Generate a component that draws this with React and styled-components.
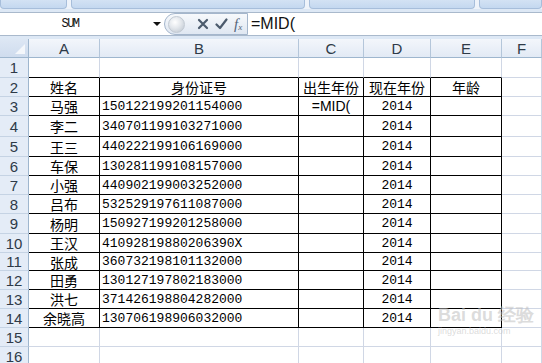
import React from "react";
import styled, { createGlobalStyle } from "styled-components";

const GlobalStyle = createGlobalStyle`
  html, body {
    margin: 0;
    padding: 0;
    overflow: hidden;
    background: #fff;
  }
`

const COLS = "29px 71px 199px 65px 67px 71px 1fr"
const ROW_HEIGHTS = [19, 20, 19, 19, 21, 20, 19, 19, 19, 20, 19, 18, 19, 19, 19, 19, 19]

const people = [
    ["马强", "150122199201154000"],
    ["李二", "340701199103271000"],
    ["王三", "440222199106169000"],
    ["车保", "130281199108157000"],
    ["小强", "440902199003252000"],
    ["吕布", "532529197611087000"],
    ["杨明", "150927199201258000"],
    ["王汉", "41092819880206390X"],
    ["张成", "360732198101132000"],
    ["田勇", "130127197802183000"],
    ["洪七", "371426198804282000"],
    ["余晓高", "130706198906032000"],
]

const Window = styled.div`
  position: relative;
  width: 542px;
  height: 363px;
  overflow: hidden;
  background: #dde8f5;
  font-family: "Liberation Sans", Arial, sans-serif;
`

const Ribbon = styled.div`
  display: flex;
  gap: 4px;
  height: 9px;
  background: #eef3fa;
`

const RibbonButton = styled.div`
  width: ${p => p.$w}px;
  flex: ${p => (p.$grow ? 1 : "none")};
  height: 8px;
  border: 1px solid #a7bedb;
  border-top: none;
  border-radius: 0 0 4px 4px;
  background: linear-gradient(#d3e2f4, #c4d8f0);
`

const FormulaBar = styled.div`
  display: flex;
  height: 22px;
  margin-top: 3px;
  border-top: 1px solid #a9b9cc;
  border-bottom: 1px solid #a9b9cc;
  background: #fff;
`

const NameBox = styled.div`
  position: relative;
  width: 164px;
  display: flex;
  align-items: center;
  justify-content: center;
  padding-right: 24px;
  box-sizing: border-box;
  font-family: "Liberation Mono", monospace;
  font-size: 12px;
  letter-spacing: -1.5px;
  color: #111;
`

const DropArrow = styled.span`
  position: absolute;
  right: 3px;
  top: 9px;
  width: 0;
  height: 0;
  border-left: 4px solid transparent;
  border-right: 4px solid transparent;
  border-top: 4px solid #111;
`

const FxPill = styled.div`
  display: flex;
  align-items: center;
  gap: 6px;
  width: 84px;
  padding-left: 3px;
  box-sizing: border-box;
  border: 1px solid #a4b6cc;
  border-radius: 11px 0 0 11px;
  background: linear-gradient(#f7f9fc, #dfe7f2);
`

const Orb = styled.span`
  width: 15px;
  height: 15px;
  margin-right: 6px;
  border-radius: 50%;
  background: radial-gradient(circle at 40% 35%, #ffffff 0%, #e3e7ec 45%, #b9c2cc 100%);
  border: 1px solid #c2cad3;
`

const Fx = styled.span`
  font-family: "Liberation Serif", serif;
  font-style: italic;
  font-size: 15px;
  color: #54657a;
  sub {
    font-size: 9px;
    vertical-align: -1px;
  }
`

const FormulaInput = styled.div`
  flex: 1;
  display: flex;
  align-items: center;
  padding-left: 3px;
  font-size: 16px;
  color: #111;
`

const Sheet = styled.div`
  display: grid;
  grid-template-columns: ${COLS};
  grid-template-rows: ${ROW_HEIGHTS.map(h => h + "px").join(" ")};
  margin-top: 3px;
  background: #fff;
`

const Corner = styled.div`
  position: relative;
  box-sizing: border-box;
  border-right: 1px solid #9eb6ce;
  border-bottom: 1px solid #9eb6ce;
  background: linear-gradient(#dde7f4, #cfdcee);
  &::after {
    content: "";
    position: absolute;
    right: 3px;
    bottom: 3px;
    border-left: 10px solid transparent;
    border-bottom: 10px solid #f4f7fb;
  }
`

const ColHead = styled.div`
  display: flex;
  align-items: center;
  justify-content: center;
  box-sizing: border-box;
  border-right: 1px solid #b4c6da;
  border-bottom: 1px solid #9eb6ce;
  background: linear-gradient(#f3f6fb, #e2eaf5);
  color: #2e3a48;
  font-size: 15px;
  line-height: 1;
`

const RowHead = styled.div`
  display: flex;
  align-items: center;
  justify-content: center;
  box-sizing: border-box;
  border-right: 1px solid #9eb6ce;
  border-bottom: 1px solid #c5d3e4;
  background: #e4ecf7;
  color: #2e3a48;
  font-size: 15px;
  line-height: 1;
`

const Cell = styled.div`
  display: flex;
  align-items: center;
  justify-content: ${p => (p.$left ? "flex-start" : "center")};
  padding-left: ${p => (p.$left ? "2px" : "0")};
  box-sizing: border-box;
  white-space: nowrap;
  line-height: 1;
  border-right: 1px solid ${p => (p.$boxR ? "#000" : "#d0d7e5")};
  border-bottom: 1px solid ${p => (p.$boxB ? "#000" : "#d0d7e5")};
  color: #000;
  font-family: ${p =>
    p.$kind === "mono"
      ? '"Liberation Mono", monospace'
      : p.$kind === "sans"
      ? '"Liberation Sans", Arial, sans-serif'
      : '"Noto Sans CJK SC", sans-serif'};
  font-size: ${p => (p.$kind === "mono" ? "13px" : p.$kind === "sans" ? "14px" : "14px")};
`

const Watermark = styled.div`
  position: absolute;
  left: 438px;
  top: 306px;
  color: rgba(190, 190, 190, 0.55);
  font-family: "Liberation Sans", Arial, sans-serif;
  font-weight: bold;
  font-size: 18px;
  line-height: 18px;
  small {
    display: block;
    font-size: 9px;
    font-weight: normal;
    line-height: 14px;
  }
`

function XIcon() {
    return (
        <svg width="12" height="12" viewBox="0 0 12 12">
            <path d="M2 2 L10 10 M10 2 L2 10" stroke="#4c5b6d" strokeWidth="2.2" strokeLinecap="round"/>
        </svg>
    )
}

function CheckIcon() {
    return (
        <svg width="13" height="12" viewBox="0 0 13 12">
            <path d="M1.5 6.5 L5 10 L11.5 1.5" stroke="#4c5b6d" strokeWidth="2.2" fill="none" strokeLinecap="round" strokeLinejoin="round"/>
        </svg>
    )
}

function buildRows() {
    const letters = ["A", "B", "C", "D", "E", "F"]
    const cells = [<Corner key="corner"/>]
    letters.forEach(l => cells.push(<ColHead key={"h" + l}>{l}</ColHead>))

    for (let r = 1; r <= 16; r++) {
        cells.push(<RowHead key={"r" + r}>{r}</RowHead>)
        const inTable = r >= 2 && r <= 14
        const aboveTable = r === 1
        const values = ["", "", "", "", "", ""]
        const kinds = ["cjk", "mono", "cjk", "mono", "cjk", "cjk"]
        if (r === 2) {
            values.splice(0, 5, "姓名", "身份证号", "出生年份", "现在年份", "年龄")
            kinds[1] = "cjk"
            kinds[3] = "cjk"
        } else if (r >= 3 && r <= 14) {
            const [name, id] = people[r - 3]
            values[0] = name
            values[1] = id
            values[3] = "2014"
            if (r === 3) {
                values[2] = "=MID("
                kinds[2] = "sans"
            }
        }
        for (let c = 0; c < 6; c++) {
            const tableCol = c < 5
            cells.push(
                <Cell
                    key={r + "-" + c}
                    $kind={kinds[c]}
                    $left={c === 1 && r !== 2}
                    $boxR={inTable && tableCol}
                    $boxB={(inTable || aboveTable) && tableCol}
                >
                    {values[c]}
                </Cell>
            )
        }
    }
    return cells
}

export default function App() {
    return (
        <Window>
            <GlobalStyle/>
            <Ribbon>
                <RibbonButton $w={65}/>
                <RibbonButton $w={232}/>
                <RibbonButton $w={164}/>
                <RibbonButton $grow/>
            </Ribbon>
            <FormulaBar>
                <NameBox>
                    SUM
                    <DropArrow/>
                </NameBox>
                <FxPill>
                    <Orb/>
                    <XIcon/>
                    <CheckIcon/>
                    <Fx>f<sub>x</sub></Fx>
                </FxPill>
                <FormulaInput>=MID(</FormulaInput>
            </FormulaBar>
            <Sheet>{buildRows()}</Sheet>
            <Watermark>
                Bai du 经验
                <small>jingyan.baidu.com</small>
            </Watermark>
        </Window>
    )
}
